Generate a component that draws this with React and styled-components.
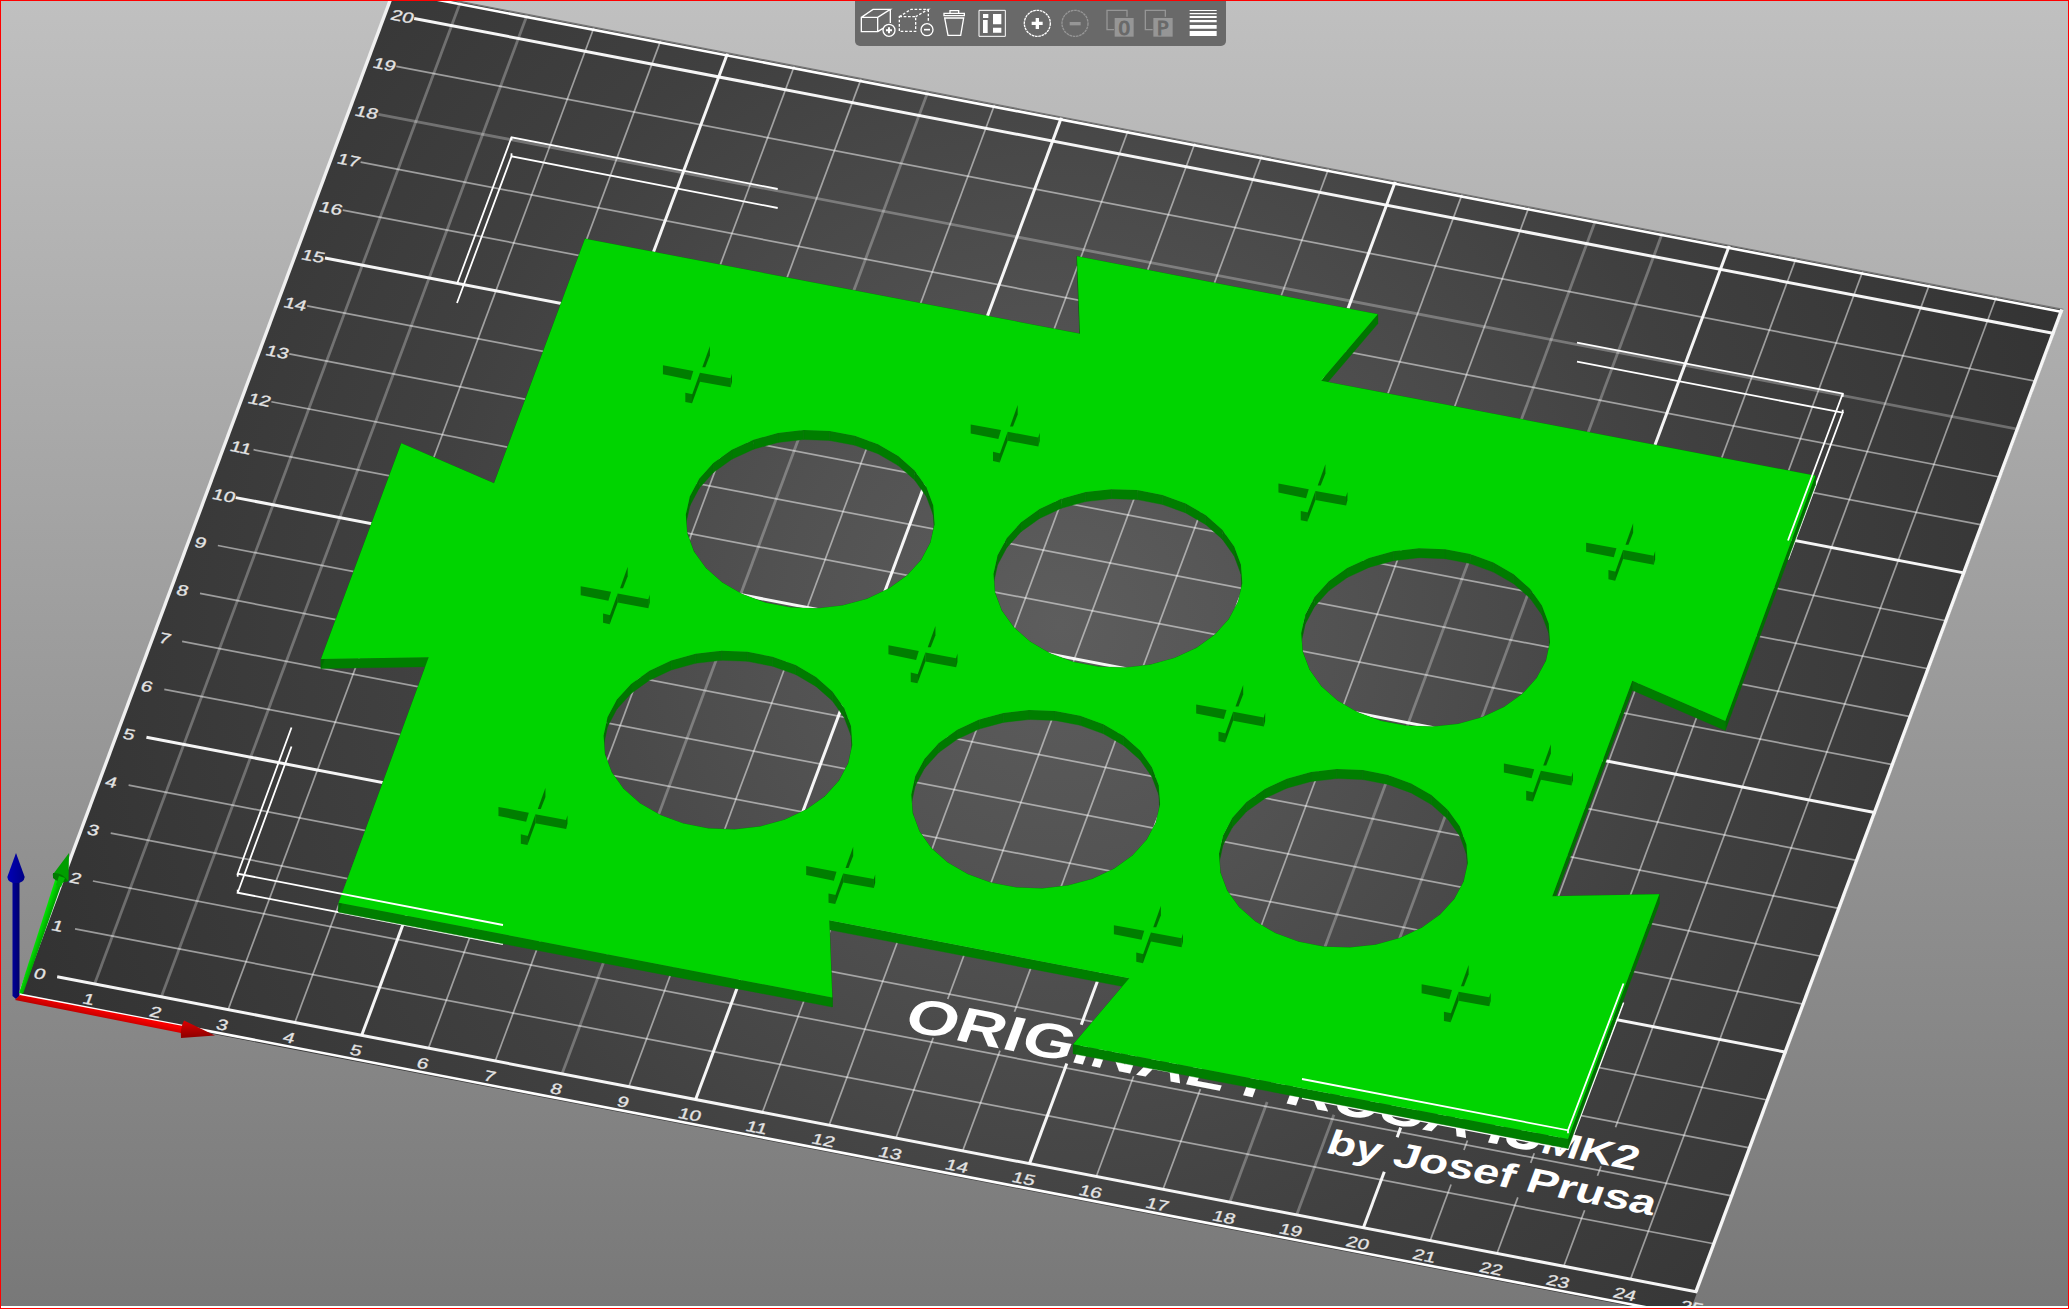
import React from 'react';
import styled, { createGlobalStyle } from 'styled-components';

const GlobalStyle = createGlobalStyle`
  * { box-sizing: border-box; }
  body { margin: 0; background: #c0c0c0; font-family: "Liberation Sans", Arial, sans-serif; }
`;

const Viewport = styled.main`
  position: relative;
  height: 100vh;
  overflow: hidden;
  background: linear-gradient(#c0c0c0, #787878);
`;

const Frame = styled.div`
  position: absolute;
  inset: 0;
  border: 1px solid #f00;
  pointer-events: none;

  &::after {
    content: '';
    position: absolute;
    inset: auto 0 0 0;
    height: 2px;
    background: #fff;
  }
`;

const Scene = styled.svg`
  display: block;
  width: 100%;
  height: 100%;
`;

const ToolbarDock = styled.header`
  position: absolute;
  inset: 0 0 auto 11px;
  display: flex;
  justify-content: center;
`;

const Toolbar = styled.div`
  display: flex;
  gap: 7px;
  padding: 0 4px;
  background: #696969;
  border-radius: 0 0 5px 5px;
`;

const ToolGroup = styled.div`
  display: flex;
`;

const ToolButton = styled.button`
  width: 38px;
  height: 46px;
  padding: 0;
  border: 0;
  background: none;
  color: ${(p) => (p.disabled ? '#969696' : '#fff')};
  cursor: ${(p) => (p.disabled ? 'default' : 'pointer')};
`;

const Icon = styled.svg`
  display: block;
  width: 38px;
  height: 46px;
  fill: none;
  stroke: currentColor;
  stroke-width: 4;
`;

const IconLetter = styled.text`
  font: 400 60px "DejaVu Sans Mono", monospace;
  text-anchor: middle;
  fill: #696969;
  stroke: #696969;
  stroke-width: 3;
`;

const BedLabel = styled.text`
  font: 400 30px "Liberation Sans", Arial, sans-serif;
  fill: #e4e4e4;
  stroke: #e4e4e4;
  stroke-width: 0.6;
  text-anchor: ${(p) => p.$anchor || 'start'};
`;

const BedLogo = styled.text`
  font: 700 ${(p) => p.$size}px "Liberation Sans", Arial, sans-serif;
  fill: #fff;
`;

/* Bed plane: one unit is one centimetre, projected orthographically. */
const EX = [66.78, 12.83];
const EY = [17.85, -47.92];
const ORIGIN = [27.8, 971.17];
const project = (a, b) => [
  ORIGIN[0] + EX[0] * a + EY[0] * b,
  ORIGIN[1] + EX[1] * a + EY[1] * b,
];
const PLANE = `matrix(${EX[0] / 100} ${EX[1] / 100} ${-EY[0] / 100} ${-EY[1] / 100} ${ORIGIN[0]} ${ORIGIN[1]})`;
const range = (from, to) => Array.from({ length: to - from + 1 }, (_, i) => from + i);
const points = (list) => list.map((p) => p.map((n) => n.toFixed(1)).join(',')).join(' ');

function PlaneLine({ from, to, width, opacity = 1, color = '#fff' }) {
  const [x1, y1] = project(...from);
  const [x2, y2] = project(...to);
  return <line x1={x1} y1={y1} x2={x2} y2={y2} stroke={color} strokeWidth={width} strokeOpacity={opacity} />;
}

const SOFT_X = [1, 2, 8, 18, 19];
const SOFT_Y = [18];

function columnSpans(x) {
  if (x >= 20 && x <= 23) return [[0, 1.17], [1.89, 2.09], [2.9, 20.5]];
  if (x >= 13 && x <= 19) return [[0, 2.09], [2.9, 20.5]];
  return [[0, 20.5]];
}

function lineStyle(n, soft) {
  if (n % 5 === 0) return { width: 3, opacity: 0.95 };
  return soft.includes(n) ? { width: 2.8, opacity: 0.28 } : { width: 1.7, opacity: 0.5 };
}

function Bed() {
  const corners = [[0, -0.53], [25, -0.53], [25, 20.5], [0, 20.5]].map((c) => project(...c));
  return (
    <g>
      <polygon points={points(corners)} fill="url(#bedShade)" />
      {range(1, 24).map((x) =>
        columnSpans(x).map(([b0, b1]) => (
          <PlaneLine key={`${x}-${b0}`} from={[x, b0]} to={[x, b1]} {...lineStyle(x, SOFT_X)} />
        ))
      )}
      {range(0, 20).map((y) => (
        <PlaneLine key={y} from={[0.44, y]} to={[25, y]} {...lineStyle(y, SOFT_Y)} />
      ))}
      <PlaneLine from={[0, -0.49]} to={[25, -0.49]} width={2.6} />
      <PlaneLine from={[0, 20.5]} to={[25, 20.5]} width={1.4} color="#777" />
      <PlaneLine from={[0, 20.45]} to={[25, 20.45]} width={2.6} />
      <PlaneLine from={[0.01, -0.5]} to={[0.01, 20.5]} width={3.4} color="#f0f0f0" />
      <PlaneLine from={[24.98, 0]} to={[24.98, 20.5]} width={3.4} color="#f6f6f6" />
      <g transform={PLANE}>
        {range(0, 20).map((n) => (
          <BedLabel key={`y${n}`} x={10} y={-n * 100 + 11}>{n}</BedLabel>
        ))}
        {range(1, 25).map((n) => (
          <BedLabel key={`x${n}`} x={n * 100} y={42} $anchor="middle">{n}</BedLabel>
        ))}
        <BedLogo $size={98} x={1252} y={-213}>ORIGINAL PRUSA i3</BedLogo>
        <BedLogo $size={68} x={2206} y={-213}>MK2</BedLogo>
        <BedLogo $size={69} x={1906} y={-132}>by Josef Prusa</BedLogo>
      </g>
    </g>
  );
}

const OUTLINE = [
  [585, 238.7], [1080, 333.7], [1077, 256.3], [1377.7, 314.3], [1321, 380.7],
  [1815.3, 475.7], [1725.3, 721], [1632.3, 680.7], [1552.3, 896.3], [1659.3, 894.3],
  [1568, 1139], [1073.3, 1044.3], [1129.3, 978.3], [829.3, 920.3], [832.3, 997.5],
  [338.7, 902.7], [428.7, 657.3], [321, 659], [401.3, 443.3], [494, 483.3],
];
const PITCH = 4.608;
const shift = ([x, y], i, j) => [
  x + PITCH * (EX[0] * i - EY[0] * j),
  y + PITCH * (EX[1] * i - EY[1] * j),
];
const HOLES = [0, 1].flatMap((j) => [0, 1, 2].map((i) => shift([810.2, 519.3], i, j)));
const CROSSES = [0, 1, 2].flatMap((j) => [0, 1, 2, 3].map((i) => shift([697.3, 375], i, j)));
const RADIUS = 1.802;
const THICKNESS = 9.5;

const ring = ([cx, cy]) =>
  range(0, 29).map((k) => {
    const t = (k / 30) * Math.PI * 2;
    const c = Math.cos(t) * RADIUS;
    const s = Math.sin(t) * RADIUS;
    return [cx + c * EX[0] + s * EY[0], cy + c * EX[1] + s * EY[1]];
  });

function Walls({ loop }) {
  return loop.map((p, k) => {
    const q = loop[(k + 1) % loop.length];
    const dx = Math.abs(q[0] - p[0]);
    const facing = dx / Math.hypot(dx, q[1] - p[1]);
    const fill = `rgb(0 ${Math.round(104 + 22 * facing)} 0)`;
    const quad = [p, q, [q[0], q[1] + THICKNESS], [p[0], p[1] + THICKNESS]];
    return <polygon key={k} points={points(quad)} fill={fill} stroke={fill} strokeWidth="0.4" />;
  });
}

function Cross({ at }) {
  return (
    <g transform={`translate(${at[0]} ${at[1]}) scale(0.33333) translate(-172 -135)`}>
      <path d="M210 48V76L196 112H187Z" fill="#007200" />
      <path d="M69 106L160 123L152 150L69 133Z" fill="#007e00" />
      <path d="M180 128L272 145V172L180 155Z" fill="#007e00" />
      <path d="M272 145L276 131V156L272 172Z" fill="#006c00" />
      <path d="M136 188L158 193L156 220L136 216Z" fill="#007e00" />
      <path d="M180 128V155L156 220V195Z" fill="#007200" />
    </g>
  );
}

function Model() {
  const loops = [OUTLINE, ...HOLES.map(ring)];
  const face = loops.map((l) => `M${points(l)}Z`).join(' ');
  return (
    <g>
      {loops.map((l, k) => <Walls key={k} loop={l} />)}
      <path d={face} fill="#00d400" fillRule="evenodd" />
      {CROSSES.map((c, k) => <Cross key={k} at={c} />)}
    </g>
  );
}

const BRACKETS = [
  [[457, 284], [511.5, 137.3], [777.7, 189]],
  [[1577, 342.7], [1842.7, 393.7], [1788, 540.5]],
  [[291.5, 727.5], [237.7, 873.7], [503, 925]],
  [[1302, 1079], [1568, 1130.3], [1623.5, 983.5]],
];

function Brackets({ drop = 0 }) {
  return (
    <g transform={`translate(0 ${drop})`} fill="none" stroke="#fff" strokeWidth="1.8">
      {BRACKETS.map((b, k) => (
        <g key={k}>
          <polyline points={points(b)} />
          <path d={drop ? `M${b[1][0]} ${b[1][1]}v-3` : `M${b[1][0]} ${b[1][1]}v3`} />
        </g>
      ))}
    </g>
  );
}

function Axes() {
  return (
    <g>
      <path d="M12.5 880H19.5V996L16 999L12.5 996Z" fill="url(#blueShaft)" />
      <path d="M16 853L24.7 877Q24 883 16 883Q8 883 7.3 877Z" fill="url(#blueCone)" />
      <path d="M19 993L57 874L64 877L23 994Z" fill="url(#greenShaft)" />
      <path d="M69 853L68.5 881Q60 884 52.5 875Z" fill="#009e00" />
      <path d="M53 873Q62 872 68 881Q61 885 53 878Z" fill="#007a00" />
      <path d="M59 876L65 878L61 887L56 885Z" fill="#00b800" />
      <path d="M15 1000L20 995L183 1026L181 1033Z" fill="url(#redShaft)" />
      <path d="M184 1020.500L215 1035.500L181 1038Q180 1028 184 1020.500Z" fill="url(#redCone)" />
    </g>
  );
}

function Defs() {
  return (
    <defs>
      <radialGradient id="bedShade" gradientUnits="userSpaceOnUse" cx="1060" cy="625" r="1100">
        <stop offset="0" stopColor="#5d5d5d" />
        <stop offset="0.25" stopColor="#525252" />
        <stop offset="0.6" stopColor="#404040" />
        <stop offset="1" stopColor="#323232" />
      </radialGradient>
      <linearGradient id="blueShaft"><stop offset="0" stopColor="#000098" /><stop offset="1" stopColor="#00006c" /></linearGradient>
      <linearGradient id="blueCone"><stop offset="0" stopColor="#0000b8" /><stop offset="1" stopColor="#000084" /></linearGradient>
      <linearGradient id="greenShaft" gradientUnits="userSpaceOnUse" x1="38" y1="933" x2="44" y2="935">
        <stop offset="0" stopColor="#00e400" /><stop offset="1" stopColor="#00a000" />
      </linearGradient>
      <linearGradient id="redShaft" gradientUnits="userSpaceOnUse" x1="100" y1="1010" x2="98" y2="1019">
        <stop offset="0" stopColor="#f80000" /><stop offset="1" stopColor="#b40000" />
      </linearGradient>
      <linearGradient id="redCone" x1="0" y1="0" x2="0" y2="1"><stop offset="0" stopColor="#dc0000" /><stop offset="1" stopColor="#8c0000" /></linearGradient>
    </defs>
  );
}

const TOOLS = [
  [
    {
      label: 'Add object', x: 55,
      art: (
        <>
          <path d="M62 52H111V95H62ZM62 52L97 28H149L111 52M149 28V69M111 95L127 85" />
          <circle cx="145" cy="91" r="18" />
          <path d="M145 82V100M136 91H154" strokeWidth="6" />
        </>
      ),
    },
    {
      label: 'Remove object', x: 169,
      art: (
        <>
          <path d="M176 50H225V94H176ZM176 50L211 28H263L225 50M263 28V67" strokeDasharray="8 5" />
          <circle cx="259" cy="89" r="18" />
          <path d="M250 89H268" strokeWidth="5" />
        </>
      ),
    },
    {
      label: 'Remove all', x: 283,
      art: (
        <>
          <path d="M328 40V32H354V40" strokeWidth="4" />
          <path d="M310 40H371V47H310ZM312 54H369L360 106H322Z" strokeWidth="4" />
        </>
      ),
    },
    {
      label: 'Arrange', x: 397,
      art: (
        <>
          <path d="M415 31H494V109H415Z" strokeWidth="3" />
          <path d="M427 42H443V54H427ZM427 60H441V99H427ZM457 42H482V73H457ZM457 83H482V98H457Z" fill="currentColor" stroke="none" />
        </>
      ),
    },
  ],
  [
    {
      label: 'Add instance', x: 532,
      art: (
        <>
          <circle cx="590" cy="70" r="39" strokeDasharray="8 2" />
          <path d="M590 54V87M573 70H606" strokeWidth="10" />
        </>
      ),
    },
    {
      label: 'Remove instance', x: 646, disabled: true,
      art: (
        <>
          <circle cx="703" cy="70" r="39" strokeDasharray="8 2" />
          <path d="M687 71H720" strokeWidth="10" />
        </>
      ),
    },
  ],
  [
    {
      label: 'Split to objects', x: 781, disabled: true,
      art: (
        <>
          <path d="M820 89H799V31H859V50" />
          <path d="M822 54H879V110H822Z" fill="currentColor" stroke="none" />
          <IconLetter x="851" y="104">O</IconLetter>
        </>
      ),
    },
    {
      label: 'Split to parts', x: 895, disabled: true,
      art: (
        <>
          <path d="M936 89H914V31H974V50" />
          <path d="M938 54H996V110H938Z" fill="currentColor" stroke="none" />
          <IconLetter x="966" y="104">P</IconLetter>
        </>
      ),
    },
  ],
  [
    {
      label: 'Layers editing', x: 1030,
      art: (
        <path
          d="M1047 30H1128V33H1047ZM1047 39H1128V43H1047ZM1047 48H1128V54H1047ZM1047 60H1128V67H1047ZM1047 75H1128V86H1047ZM1047 93H1128V108H1047Z"
          fill="currentColor"
          stroke="none"
        />
      ),
    },
  ],
];

export default function App() {
  return (
    <Viewport>
      <GlobalStyle />
      <Scene viewBox="0 0 2069 1309" preserveAspectRatio="xMidYMid slice" role="img" aria-label="Print bed">
        <Defs />
        <Bed />
        <Brackets drop={19} />
        <Model />
        <Brackets />
        <Axes />
      </Scene>
      <ToolbarDock>
        <Toolbar role="toolbar">
          {TOOLS.map((group, g) => (
            <ToolGroup key={g}>
              {group.map((tool) => (
                <ToolButton key={tool.label} type="button" aria-label={tool.label} disabled={tool.disabled}>
                  <Icon viewBox={`${tool.x} 0 114 138`}>{tool.art}</Icon>
                </ToolButton>
              ))}
            </ToolGroup>
          ))}
        </Toolbar>
      </ToolbarDock>
      <Frame />
    </Viewport>
  );
}
